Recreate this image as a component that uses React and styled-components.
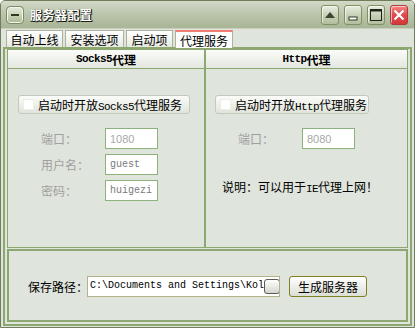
import React from 'react';
import styled, { createGlobalStyle } from 'styled-components';

const GREEN = '#8ca870';

const GlobalStyle = createGlobalStyle`
  html, body {
    margin: 0;
    padding: 0;
    background: #ffffff;
  }
  body {
    font-family: "Noto Sans CJK SC", "DejaVu Sans", sans-serif;
    font-size: 12px;
  }
  * { box-sizing: border-box; }
`;

const Window = styled.div`
  width: 415px;
  height: 328px;
  border: 1px solid #6f7d5a;
  border-radius: 5px 5px 0 0;
  background: #dfe4dc;
  display: flex;
  flex-direction: column;
  overflow: hidden;
`;

const TitleBar = styled.div`
  height: 28px;
  flex: none;
  display: flex;
  align-items: center;
  padding: 0 6px 0 6px;
  background: linear-gradient(#d3dac8, #bcc6ad 45%, #a9b596);
  border-bottom: 1px solid #c9d0be;
`;

const SysButton = styled.div`
  width: 16px;
  height: 16px;
  border: 1px solid #f2f4ee;
  outline: 1px solid #7d8c64;
  border-radius: 3px;
  background: linear-gradient(#e2e8d8, #aebc98);
  display: flex;
  align-items: center;
  justify-content: center;
  &::after {
    content: '';
    width: 8px;
    height: 2px;
    background: #2e3a24;
  }
`;

const Title = styled.div`
  margin-left: 7px;
  color: #ffffff;
  font-weight: 700;
  font-size: 12px;
  letter-spacing: 0.5px;
  text-shadow: 1px 1px 0 #1a2014, 1px 0 0 #1a2014, 0 1px 0 #1a2014;
  flex: 1;
`;

const Controls = styled.div`
  display: flex;
  gap: 5px;
`;

const CtlButton = styled.div`
  width: 18px;
  height: 20px;
  border: 1px solid ${p => (p.$close ? '#b03a3a' : '#7f9063')};
  border-radius: 3px;
  background: ${p =>
    p.$close
      ? 'linear-gradient(#f48484, #e04a4a 50%, #d03a3a)'
      : 'linear-gradient(#e8eddf, #c8d1b8 50%, #b2bea0)'};
  display: flex;
  align-items: center;
  justify-content: center;
  box-shadow: inset 1px 1px 0 rgba(255, 255, 255, 0.6);
`;

const Body = styled.div`
  flex: 1;
  display: flex;
  flex-direction: column;
  padding: 0 2px 1px 2px;
`;

const TabRow = styled.div`
  height: 18px;
  display: flex;
  align-items: flex-end;
  gap: 2px;
  padding-left: 3px;
`;

const Tab = styled.div`
  height: ${p => (p.$active ? '18px' : '17px')};
  width: ${p => p.$w}px;
  display: flex;
  align-items: center;
  justify-content: center;
  font-size: 12px;
  color: #000;
  border: 1px solid #aab39e;
  border-bottom: none;
  border-top: ${p => (p.$active ? '2px solid #f27c72' : '1px solid #aab39e')};
  background: ${p => (p.$active ? '#ffffff' : 'linear-gradient(#ffffff, #e6e9e0)')};
  margin-bottom: ${p => (p.$active ? '-1px' : '0')};
  position: relative;
  z-index: ${p => (p.$active ? 1 : 0)};
`;

const TabPage = styled.div`
  flex: 1;
  border: 2px solid ${GREEN};
  padding: 0 2px 2px 2px;
  display: flex;
  flex-direction: column;
  gap: 1px;
`;

const GroupRow = styled.div`
  height: 199px;
  flex: none;
  display: flex;
  border: 1px solid ${GREEN};
`;

const Group = styled.div`
  flex: none;
  width: ${p => p.$w}px;
  display: flex;
  flex-direction: column;
  border-left: ${p => (p.$divider ? `2px solid ${GREEN}` : 'none')};
`;

const GroupHeader = styled.div`
  height: 19px;
  flex: none;
  display: flex;
  align-items: center;
  justify-content: center;
  font-weight: 700;
  font-size: 12px;
  color: #000;
  background: linear-gradient(#fbfcf9, #e3e7df);
  border-bottom: 1px solid ${GREEN};
`;

const GroupBody = styled.div`
  flex: 1;
  display: flex;
  flex-direction: column;
  padding: 26px 0 0 ${p => p.$pad}px;
`;

const Mono = styled.span`
  font-family: "Liberation Mono", "DejaVu Sans Mono", monospace;
  font-size: 11px;
  letter-spacing: -0.6px;
  font-weight: ${p => (p.$bold ? 700 : 400)};
`;

const CheckButton = styled.div`
  width: ${p => p.$w}px;
  height: 19px;
  display: flex;
  align-items: center;
  padding-left: 4px;
  gap: 4px;
  border: 1px solid #c3cabb;
  border-radius: 3px;
  background: linear-gradient(#fbfcf9, #e0e4da);
  font-size: 12px;
  color: #000;
  white-space: nowrap;
`;

const CheckSquare = styled.span`
  width: 11px;
  height: 11px;
  flex: none;
  background: #ffffff;
  border: 1px solid #eceee8;
`;

const Fields = styled.div`
  display: flex;
  flex-direction: column;
  gap: 5px;
  margin-top: 14px;
  padding-left: ${p => p.$indent}px;
`;

const FieldRow = styled.div`
  display: flex;
  align-items: center;
  height: 21px;
`;

const Label = styled.span`
  width: 64px;
  color: ${p => (p.$disabled ? '#a0a0a0' : '#000')};
  font-size: 12px;
`;

const TextBox = styled.div`
  width: 53px;
  height: 21px;
  border: 1px solid #8db27b;
  background: #ffffff;
  display: flex;
  align-items: center;
  padding-left: 4px;
  color: ${p => (p.$sans ? '#a8a8a8' : '#7a7a7a')};
  font-family: ${p => (p.$sans ? '"Liberation Sans", Arial, sans-serif' : '"Liberation Mono", monospace')};
  font-size: ${p => (p.$sans ? '11px' : '10px')};
`;

const Note = styled.div`
  margin-top: 29px;
  padding-left: 7px;
  color: #000;
  font-size: 12px;
`;

const Bottom = styled.div`
  flex: 1;
  border: 2px solid ${GREEN};
  display: flex;
  align-items: center;
  padding: 2px 0 0 19px;
`;

const PathLabel = styled.span`
  width: 59px;
  color: #000;
  font-size: 12px;
  white-space: nowrap;
`;

const PathBox = styled.div`
  width: 193px;
  height: 21px;
  border: 1px solid #b3b28a;
  background: #ffffff;
  display: flex;
  align-items: center;
  padding: 0 2px 0 2px;
  overflow: hidden;
`;

const PathText = styled.span`
  flex: 1;
  white-space: nowrap;
  font-family: "Liberation Mono", monospace;
  font-size: 10px;
  color: #000;
  margin-top: -3px;
`;

const MiniBox = styled.span`
  width: 16px;
  height: 15px;
  flex: none;
  border: 1px solid #5a5a50;
  border-radius: 3px;
  background: linear-gradient(#ffffff, #d3d7ce);
`;

const Button = styled.div`
  margin-left: 9px;
  width: 78px;
  height: 21px;
  border: 1px solid #7f7f24;
  border-radius: 3px;
  background: linear-gradient(#ffffff, #dcdfd5);
  display: flex;
  align-items: center;
  justify-content: center;
  font-size: 12px;
  color: #000;
`;

const tabs = [
  { name: '自动上线', w: 57 },
  { name: '安装选项', w: 59 },
  { name: '启动项', w: 47 },
  { name: '代理服务', w: 58, active: true },
];

export default function App() {
  return (
    <>
      <GlobalStyle />
      <Window>
        <TitleBar>
          <SysButton />
          <Title>服务器配置</Title>
          <Controls>
            <CtlButton>
              <svg width="10" height="6" viewBox="0 0 10 6">
                <polygon points="0,6 10,6 5,0" fill="#3a4630" />
              </svg>
            </CtlButton>
            <CtlButton>
              <svg width="10" height="12" viewBox="0 0 10 12">
                <rect x="1" y="8" width="8" height="3" fill="#fff" stroke="#2e3a24" strokeWidth="1" />
              </svg>
            </CtlButton>
            <CtlButton>
              <svg width="12" height="12" viewBox="0 0 12 12">
                <rect x="0.5" y="0.5" width="11" height="11" fill="none" stroke="#1e2618" strokeWidth="1" />
                <rect x="0.5" y="0.5" width="11" height="2" fill="#1e2618" />
              </svg>
            </CtlButton>
            <CtlButton $close>
              <svg width="12" height="12" viewBox="0 0 12 12">
                <path d="M1.5 1.5 L10.5 10.5 M10.5 1.5 L1.5 10.5" stroke="#fff" strokeWidth="2.2" />
              </svg>
            </CtlButton>
          </Controls>
        </TitleBar>
        <Body>
          <TabRow>
            {tabs.map(t => (
              <Tab key={t.name} $w={t.w} $active={t.active}>{t.name}</Tab>
            ))}
          </TabRow>
          <TabPage>
            <GroupRow>
              <Group $w={196}>
                <GroupHeader><Mono $bold>Socks5</Mono>代理</GroupHeader>
                <GroupBody $pad={10}>
                  <CheckButton $w={172}>
                    <CheckSquare />
                    <span>启动时开放<Mono>Socks5</Mono>代理服务</span>
                  </CheckButton>
                  <Fields $indent={23}>
                    <FieldRow>
                      <Label $disabled>端口：</Label>
                      <TextBox $sans>1080</TextBox>
                    </FieldRow>
                    <FieldRow>
                      <Label $disabled>用户名：</Label>
                      <TextBox>guest</TextBox>
                    </FieldRow>
                    <FieldRow>
                      <Label $disabled>密码：</Label>
                      <TextBox>huigezi</TextBox>
                    </FieldRow>
                  </Fields>
                </GroupBody>
              </Group>
              <Group $w={203} $divider>
                <GroupHeader><Mono $bold>Http</Mono>代理</GroupHeader>
                <GroupBody $pad={9}>
                  <CheckButton $w={154}>
                    <CheckSquare />
                    <span>启动时开放<Mono>Http</Mono>代理服务</span>
                  </CheckButton>
                  <Fields $indent={23}>
                    <FieldRow>
                      <Label $disabled>端口：</Label>
                      <TextBox $sans>8080</TextBox>
                    </FieldRow>
                  </Fields>
                  <Note>说明：可以用于<Mono>IE</Mono>代理上网！</Note>
                </GroupBody>
              </Group>
            </GroupRow>
            <Bottom>
              <PathLabel>保存路径：</PathLabel>
              <PathBox>
                <PathText>C:\Documents and Settings\Kol</PathText>
                <MiniBox />
              </PathBox>
              <Button>生成服务器</Button>
            </Bottom>
          </TabPage>
        </Body>
      </Window>
    </>
  );
}
